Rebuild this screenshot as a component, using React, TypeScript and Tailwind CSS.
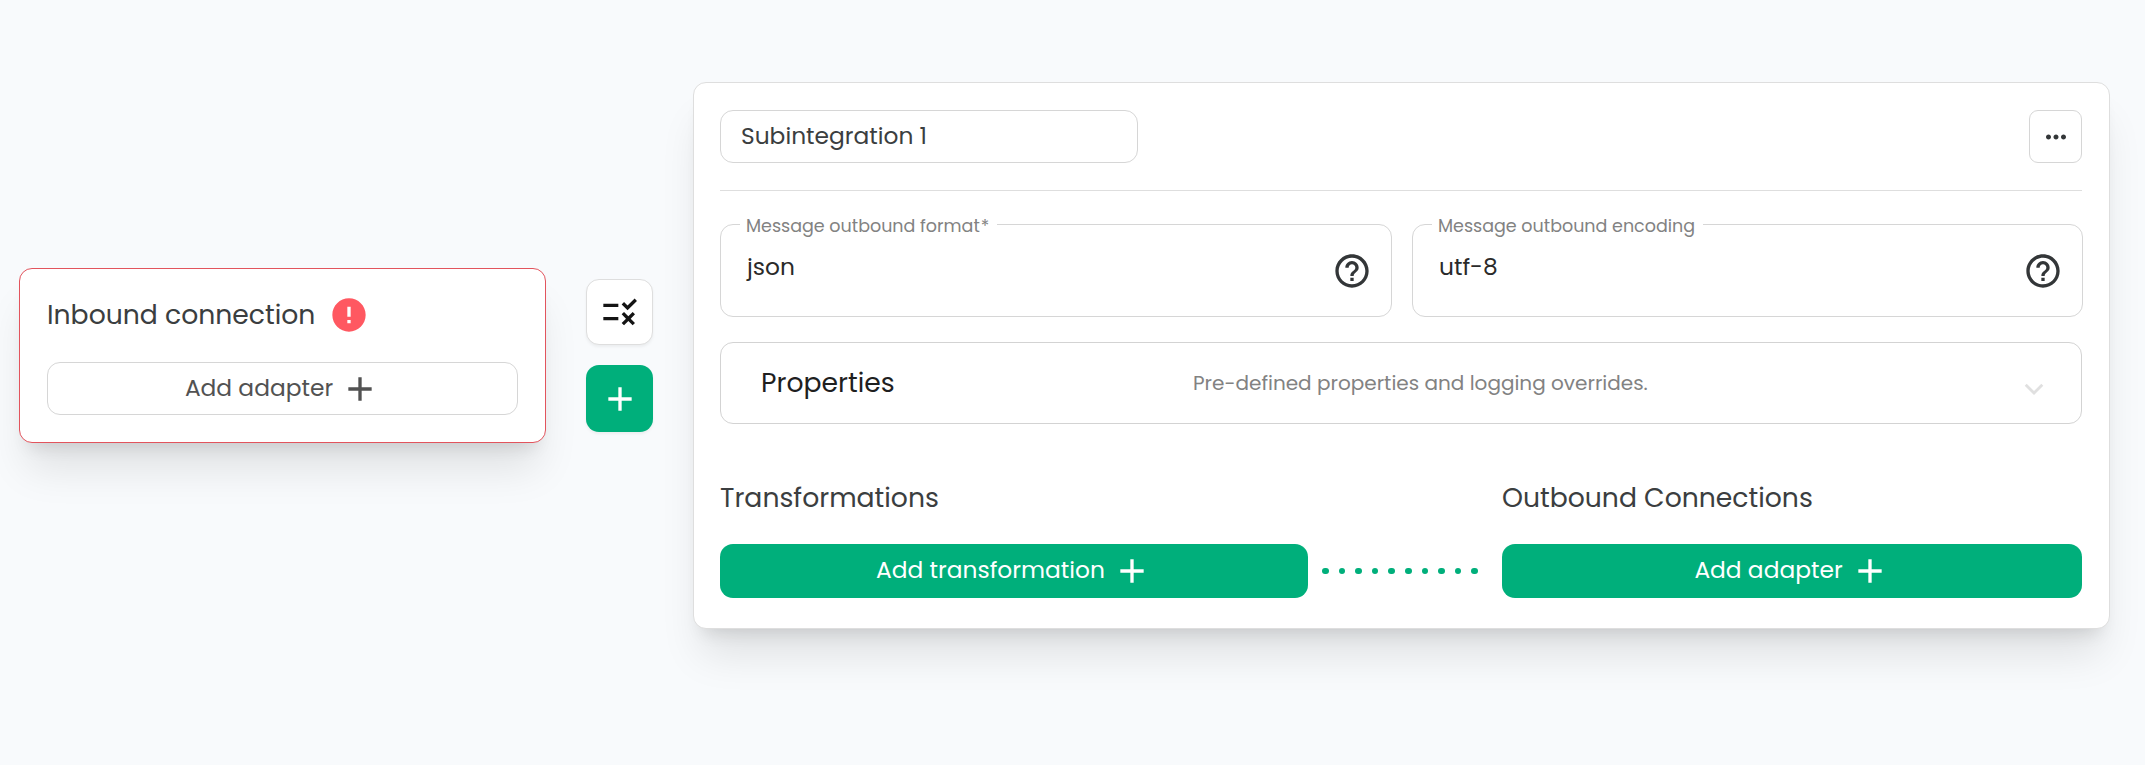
import type { ReactNode } from "react";
import { MdAdd, MdError, MdHelpOutline, MdMoreHoriz, MdRule } from "react-icons/md";

function AddButton({ label, className }: { label: string; className: string }) {
  return (
    <button className={`flex items-center justify-center gap-[7px] rounded-[13px] text-[23.33px] leading-[35px] ${className}`}>
      <span className="pb-px">{label}</span>
      <MdAdd className="size-10" />
    </button>
  );
}

function Field({ label, value, className }: { label: ReactNode; value: string; className: string }) {
  return (
    <div className={`relative flex h-[93px] shrink-0 items-start justify-between rounded-[13px] border border-[#d6d6d6] pt-6 pr-[19px] ${className}`}>
      <span className="absolute -top-[11px] left-[19px] flex bg-white pr-2 pl-[6px] text-[17.5px] leading-6 text-[#828282]">
        {label}
      </span>
      <span className="pt-px text-[23.33px] leading-[35px] text-[#2a2a2a]">{value}</span>
      <MdHelpOutline className="mt-[2px] size-10 text-[#333638]" />
    </div>
  );
}

const cardShadow = "shadow-[0_33px_42px_-8px_rgba(0,0,0,0.1),0_13px_17px_-10px_rgba(0,0,0,0.12)]";

export default function App() {
  return (
    <main className="flex h-[765px] w-[2145px] items-start overflow-hidden bg-[#f8fafc] pl-[19px] font-['Poppins','Inter',sans-serif] text-[#3b3e40]">
      <section className={`mt-[268px] h-[175px] w-[527px] rounded-[13px] border border-[#e2545d] bg-white px-[27px] pt-[26px] ${cardShadow}`}>
        <div className="flex h-10 items-center gap-[14px]">
          <h2 className="pb-px text-[26.67px] leading-10">Inbound connection</h2>
          <MdError className="size-10 text-[#ff5861]" />
        </div>
        <AddButton label="Add adapter" className="mt-[27px] h-[53px] w-full border border-[#d6d6d6] text-[#525252]" />
      </section>

      <div className="mt-[279px] ml-10 flex flex-col gap-5">
        <button className="flex h-[66px] w-[67px] items-center justify-center rounded-[13px] border border-[#dedede] bg-white text-[#141414] shadow-[0_2px_3px_rgba(0,0,0,0.05)]">
          <MdRule className="size-10" />
        </button>
        <button className="flex size-[67px] items-center justify-center rounded-[13px] bg-[#00af7b] text-white shadow-[0_2px_3px_rgba(0,0,0,0.05)]">
          <MdAdd className="size-10" />
        </button>
      </div>

      <section className={`mt-[82px] ml-10 h-[547px] w-[1417px] rounded-[13px] border border-[#dedede] bg-white pt-[27px] pr-[27px] pl-[26px] ${cardShadow}`}>
        <header className="flex h-[53px] items-center justify-between">
          <div className="flex h-[53px] w-[418px] items-center rounded-[13px] border border-[#d6d6d6] pb-px pl-5 text-[23.33px] leading-[35px]">
            Subintegration 1
          </div>
          <button className="flex size-[53px] items-center justify-center rounded-[9px] border border-[#d6d6d6] text-[#333638]">
            <MdMoreHoriz className="size-[30px]" />
          </button>
        </header>
        <hr className="mt-[27px] border-t border-[#dedede]" />

        <div className="mt-[33px] flex gap-5">
          <Field label={<>Message outbound format<span className="ml-px">*</span></>} value="json" className="w-[672px] pl-[26px]" />
          <Field label="Message outbound encoding" value="utf-8" className="w-[671px] pl-[26px]" />
        </div>

        <div className="mt-[25px] flex h-[82px] items-center rounded-[13px] border border-[#d3d3d3] pr-[37px] pl-10">
          <span className="w-[432px] pb-px text-[26.67px] leading-10 text-[#1f1f1f]">Properties</span>
          <span className="grow text-xl leading-[30px] text-[#828282]">Pre-defined properties and logging overrides.</span>
          <svg viewBox="0 0 20 12" className="mt-3 h-3 w-5" fill="none" stroke="#e0e0e0" strokeWidth="2.8">
            <path d="M1.7 1.8 10 10 18.3 1.8" />
          </svg>
        </div>

        <div className="mt-[54px] flex items-end">
          <div className="w-[588px]">
            <h3 className="text-[26.67px] leading-10">Transformations</h3>
            <AddButton label="Add transformation" className="mt-[26px] h-[54px] w-full bg-[#00af7b] text-white" />
          </div>
          <div className="flex h-[54px] w-[194px] items-center gap-[10px] pl-[14px]">
            {Array.from({ length: 10 }, (_, i) => (
              <span key={i} className="size-[6.6px] shrink-0 rounded-full bg-[#00af7b]" />
            ))}
          </div>
          <div className="w-[580px]">
            <h3 className="text-[26.67px] leading-10">Outbound Connections</h3>
            <AddButton label="Add adapter" className="mt-[26px] h-[54px] w-full bg-[#00af7b] text-white" />
          </div>
        </div>
      </section>
    </main>
  );
}
